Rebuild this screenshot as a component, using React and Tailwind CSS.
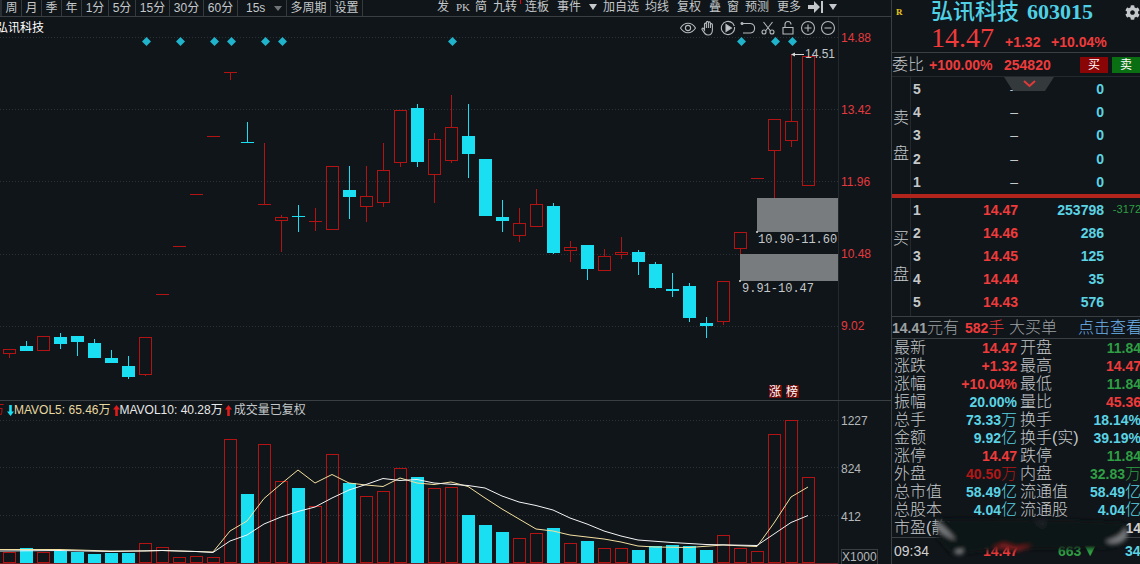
import React from "react";
import { FaCog } from "react-icons/fa";

const UP = "#b31312";
const DOWN = "#1adff2";

// [type, high, bodyTop, bodyBottom, low, volumeTop]
// r = rising (outlined), c = falling (filled)
const candles = [
  ["r", 349, 349, 353, 358, 552],
  ["c", 341, 346, 351, 351, 548],
  ["r", 336, 336, 350, 350, 552],
  ["c", 333, 337, 344, 349, 551],
  ["c", 336, 336, 342, 356, 552],
  ["c", 339, 343, 358, 358, 554],
  ["c", 350, 358, 363, 363, 553],
  ["c", 356, 366, 377, 379, 553],
  ["r", 337, 337, 374, 376, 543],
  ["r", 294, 294, 294, 294, 547],
  ["r", 246, 246, 246, 246, 557],
  ["r", 194, 194, 194, 194, 556],
  ["r", 136, 136, 136, 136, 557],
  ["r", 72, 72, 72, 80, 439],
  ["c", 122, 142, 142, 142, 494],
  ["r", 143, 204, 204, 204, 444],
  ["r", 215, 217, 220, 252, 481],
  ["c", 205, 216, 216, 232, 488],
  ["r", 208, 221, 221, 231, 506],
  ["r", 166, 166, 229, 229, 454],
  ["c", 166, 190, 197, 219, 483],
  ["r", 166, 196, 206, 222, 496],
  ["r", 143, 170, 202, 207, 491],
  ["r", 110, 110, 162, 167, 468],
  ["c", 104, 108, 162, 167, 477],
  ["r", 133, 139, 174, 203, 488],
  ["r", 95, 127, 160, 163, 487],
  ["c", 104, 136, 154, 178, 515],
  ["c", 159, 159, 216, 216, 525],
  ["c", 200, 217, 221, 232, 532],
  ["r", 208, 223, 235, 242, 538],
  ["r", 189, 204, 226, 226, 533],
  ["c", 203, 206, 253, 254, 528],
  ["r", 241, 247, 250, 262, 543],
  ["c", 245, 245, 269, 280, 541],
  ["r", 249, 256, 270, 270, 548],
  ["r", 237, 252, 254, 259, 548],
  ["c", 250, 252, 262, 275, 550],
  ["c", 262, 264, 288, 289, 546],
  ["c", 273, 289, 291, 297, 545],
  ["c", 283, 286, 318, 322, 546],
  ["c", 317, 323, 326, 338, 550],
  ["r", 281, 281, 321, 325, 535],
  ["r", 232, 232, 248, 254, 548],
  ["r", 178, 178, 178, 178, 551],
  ["r", 119, 119, 150, 198, 434],
  ["r", 54, 121, 140, 147, 420],
  ["r", 56, 56, 185, 185, 477],
];

const ma5 =
  "0,549.5 60,549.5 111,551 145,551 162,550.5 196,551.5 213,552 230,531 247,521 264,498.5 281,484 298,470 315,483 332,474.5 349,483 366,485 383,486.5 400,478 417,483 434,484.5 451,482 468,486.5 485,498 502,509 519,519 536,529 553,531 570,535 587,537 604,539 621,542 638,546 655,547 689,547.5 723,545 757,546.5 774,523 791,497 808,487";
const ma10 =
  "0,551 60,550.5 111,551.5 162,550.5 196,551.5 213,552.5 230,541 247,535 264,524 281,517 298,511.5 315,507 332,498 349,490 366,484.5 383,478.5 400,480.5 417,479.5 434,483 468,485.5 485,488 502,496 519,502 536,505.5 553,510 570,518 587,524 604,531 621,536 638,540 672,542.5 706,544.5 757,545.5 774,534 791,522.5 808,515.5";

const diamonds = [146, 180, 214, 231, 265, 282, 452, 741, 775, 792];

const periods = [
  ["周", "w-[20px]"],
  ["月", "w-[20px]"],
  ["季", "w-[20px]"],
  ["年", "w-[20px]"],
  ["1分", "w-[27px]"],
  ["5分", "w-[27px]"],
  ["15分", "w-[34px]"],
  ["30分", "w-[34px]"],
  ["60分", "w-[34px]"],
];

const sellRows = [5, 4, 3, 2, 1];
const buyRows = [
  [1, "14.47", "253798", "-3172"],
  [2, "14.46", "286"],
  [3, "14.45", "125"],
  [4, "14.44", "35"],
  [5, "14.43", "576"],
];

const RED = "text-[#ef3b3b]";
const DARKRED = "text-[#b01818]";
const CYAN = "text-[#5bd3e4]";
const GREEN = "text-[#2f9e44]";

// label, value, unit, colour - twice per row
const stats = [
  ["最新", "14.47", "", RED, "开盘", "11.84", "", GREEN],
  ["涨跌", "+1.32", "", RED, "最高", "14.47", "", RED],
  ["涨幅", "+10.04%", "", RED, "最低", "11.84", "", GREEN],
  ["振幅", "20.00%", "", CYAN, "量比", "45.36", "", RED],
  ["总手", "73.33", "万", CYAN, "换手", "18.14%", "", CYAN],
  ["金额", "9.92", "亿", CYAN, "换手(实)", "39.19%", "", CYAN],
  ["涨停", "14.47", "", RED, "跌停", "11.84", "", GREEN],
  ["外盘", "40.50", "万", DARKRED, "内盘", "32.83", "万", GREEN],
  ["总市值", "58.49", "亿", CYAN, "流通值", "58.49", "亿", CYAN],
  ["总股本", "4.04", "亿", CYAN, "流通股", "4.04", "亿", CYAN],
  ["市盈(静)", "", "", CYAN, "", "14", "", "text-[#d0d0d0]"],
];

function Toolbar() {
  return (
    <nav className="flex h-[17px] items-start justify-between border-b border-[#3a3f43] text-xs leading-[14px] text-[#c4c8ca]">
      <div className="flex border-l-2 border-[#2a2f33]">
        {periods.map(([label, width]) => (
          <button
            key={label}
            className={`${width} h-4 shrink-0 border-r border-[#353a3e] text-center`}
          >
            {label}
          </button>
        ))}
        <button className="flex h-4 w-[49px] items-center justify-between border-r border-[#353a3e] pr-1 pl-2">
          15s
          <svg width="8" height="5" viewBox="0 0 8 5">
            <path d="M0 0h8L4 5z" fill="#6f7478" />
          </svg>
        </button>
        <button className="h-4 w-11 border-r border-[#353a3e] whitespace-nowrap">
          多周期
        </button>
        <button className="h-4 w-8 border-r border-[#353a3e]">设置</button>
      </div>
      <div className="mr-[50px] flex shrink-0 items-start whitespace-nowrap">
        <button className="w-5">发</button>
        <button className="w-5 font-['Liberation_Serif'] text-[11px]">PK</button>
        <button className="w-4">简</button>
        <button className="relative w-8">
          九转
          <span className="absolute top-0 right-0 h-1 w-px bg-red-600" />
        </button>
        <button className="w-8">连板</button>
        <button className="w-8">事件</button>
        <button className="flex h-[14px] w-4 items-center justify-center" aria-label="事件菜单">
          <svg width="8" height="6" viewBox="0 0 8 6">
            <path d="M0 0h8L4 6z" fill="#c4c8ca" />
          </svg>
        </button>
        <button className="w-10">加自选</button>
        <button className="w-8">均线</button>
        <button className="w-8">复权</button>
        <button className="w-5">叠</button>
        <button className="w-4">窗</button>
        <button className="w-8">预测</button>
        <button className="w-8">更多</button>
        <button className="flex h-[14px] w-5 items-center justify-center" aria-label="跳到最新">
          <svg width="15" height="12" viewBox="0 0 15 12">
            <path d="M0 4h6V0l6 6-6 6V8H0zM13 0h2v12h-2z" fill="#c4c8ca" />
          </svg>
        </button>
        <button className="flex h-[14px] w-4 items-center justify-center" aria-label="展开">
          <svg width="8" height="6" viewBox="0 0 8 6">
            <path d="M0 0h8L4 6z" fill="#c4c8ca" />
          </svg>
        </button>
      </div>
    </nav>
  );
}

function ToolIcons() {
  const common = {
    width: 16,
    height: 16,
    viewBox: "0 0 16 16",
    fill: "none",
    stroke: "#b4b9bc",
    strokeWidth: 1.1,
  };
  return (
    <div className="flex gap-1">
      <button aria-label="显示">
        <svg {...common}>
          <path d="M.5 8C2.5 4.800 5 3.300 8 3.300S13.500 4.800 15.500 8C13.500 11.200 11 12.700 8 12.700S2.500 11.200.5 8z" />
          <circle cx="8" cy="8" r="2.600" />
        </svg>
      </button>
      <button aria-label="拖动">
        <svg {...common}>
          <path d="M4.500 10V4.200c0-1.500 1.900-1.500 1.900 0V8V2.500c0-1.500 2-1.500 2 0V8V3c0-1.500 2-1.500 2 0v5V4.700c0-1.400 2-1.400 2 0V10c0 3-1.400 5-4.200 5C5.500 15 4.500 13.500 2.200 9.800c-.9-1.500.8-2.200 1.500-1.100z" />
        </svg>
      </button>
      <button aria-label="播放">
        <svg {...common}>
          <path d="M12.500 3.200A6.600 6.600 0 1 0 14.500 7M10.500 1.800A6.600 6.600 0 0 1 14.300 6" />
          <path d="M6 4.500v7L11.500 8z" fill="#c4c8ca" />
        </svg>
      </button>
      <button aria-label="撤销">
        <svg {...common}>
          <path d="M2 3.500h8.500a4.800 4.800 0 0 1 0 9.500H3" />
          <circle cx="2" cy="3.500" r="1" fill="#b4b9bc" />
        </svg>
      </button>
      <button aria-label="剪切">
        <svg {...common}>
          <path d="M3.500 2l7 9M12.500 2l-7 9" />
          <circle cx="4" cy="12" r="2" />
          <circle cx="12" cy="12" r="2" />
        </svg>
      </button>
      <button aria-label="锁定">
        <svg {...common}>
          <path d="M3 7.500h10v6.500H3zM5 7.500V4.500a3 3 0 0 1 6 0" />
        </svg>
      </button>
      <button aria-label="放大">
        <svg {...common}>
          <circle cx="8" cy="8" r="6.500" />
          <path d="M8 4.500v7M4.500 8h7" />
        </svg>
      </button>
      <button aria-label="缩小">
        <svg {...common}>
          <circle cx="8" cy="8" r="6.500" />
          <path d="M4.500 8h7" />
        </svg>
      </button>
    </div>
  );
}

function Candle({ index, data }) {
  const [type, high, top, bottom, low] = data;
  const x = 9 + index * 17;
  const color = type === "r" ? UP : DOWN;
  return (
    <g shapeRendering="crispEdges">
      {high < top && <rect x={x} y={high} width="1" height={top - high} fill={color} />}
      {low > bottom && <rect x={x} y={bottom} width="1" height={low - bottom} fill={color} />}
      {top === bottom ? (
        <rect x={x - 6} y={top} width="13" height="1" fill={color} />
      ) : type === "r" ? (
        <rect x={x - 5.5} y={top + 0.5} width="12" height={bottom - top} fill="none" stroke={color} />
      ) : (
        <rect x={x - 6} y={top} width="13" height={bottom - top} fill={color} />
      )}
    </g>
  );
}

function GridLines({ lines }) {
  return lines.map((y) => (
    <line
      key={y}
      x1="0"
      x2="838"
      y1={y + 0.5}
      y2={y + 0.5}
      stroke="#2c3135"
      strokeDasharray="1 2"
    />
  ));
}

function PriceChart() {
  return (
    <svg className="block w-full" viewBox="0 17 838 383" preserveAspectRatio="none">
      <GridLines lines={[37, 109, 181, 254, 326]} />
      {diamonds.map((x) => (
        <path key={x} d={`M${x + 0.5} 37l4.500 4.500-4.500 4.500-4.500-4.500z`} fill="#1fb4cb" />
      ))}
      {candles.map((c, i) => (
        <Candle key={i} index={i} data={c} />
      ))}
      <rect x="757" y="198" width="81" height="34" fill="#797c7f" />
      <rect x="740" y="254" width="98" height="27" fill="#797c7f" />
      <circle cx="757" cy="232" r="1" fill="#ddd" />
      <circle cx="740" cy="281" r="1" fill="#ddd" />
      <g fill="#c4c8ca" fontSize="12">
        <text x="758" y="243" fontFamily="Liberation Mono, monospace">10.90-11.60</text>
        <text x="742" y="292" fontFamily="Liberation Mono, monospace">9.91-10.47</text>
        <text x="805" y="58" fontFamily="Liberation Sans, sans-serif">14.51</text>
      </g>
      <path d="M791 54.500l4-2v1.500h9v1h-9v1.500z" fill="#d8d8d8" />
      <rect x="769" y="385" width="13" height="13" fill="#6d0b0b" />
      <rect x="786" y="385" width="13" height="13" fill="#6d0b0b" />
      <g fill="#fff" fontSize="12" fontFamily="Noto Sans CJK SC, sans-serif">
        <text x="769" y="396">涨</text>
        <text x="786" y="396">榜</text>
      </g>
    </svg>
  );
}

function VolumeChart() {
  return (
    <svg className="block w-full" viewBox="0 419 838 145" preserveAspectRatio="none">
      <GridLines lines={[420, 467, 515]} />
      <g shapeRendering="crispEdges">
        {candles.map(([type, , , , , top], i) =>
          type === "r" ? (
            <rect key={i} x={3.5 + i * 17} y={top + 0.5} width="12" height={562 - top} fill="none" stroke={UP} />
          ) : (
            <rect key={i} x={3 + i * 17} y={top} width="13" height={563 - top} fill={DOWN} />
          )
        )}
        <rect x="0" y="563" width="838" height="1" fill="#7a2228" />
      </g>
      <polyline points={ma5} fill="none" stroke="#f3e0a0" />
      <polyline points={ma10} fill="none" stroke="#f4f4f4" />
    </svg>
  );
}

function Arrow({ up }) {
  return (
    <svg width="7" height="11" viewBox="0 0 7 11" className={up ? "text-[#e01b1b]" : "rotate-180 text-[#1adff2]"}>
      <path d="M3.500 0L7 4.500H4.800V11H2.200V4.500H0z" fill="currentColor" />
    </svg>
  );
}

function ChartPanel() {
  return (
    <main className="min-w-0 flex-1">
      <Toolbar />
      <section className="flex border-b border-[#3a3f43]">
        <div className="relative min-w-0 flex-1">
          <PriceChart />
          <div className="absolute inset-x-0 top-0 flex justify-between pt-[3px] pr-[2px]">
            <h1 className="-ml-1 text-xs leading-4 text-white">弘讯科技</h1>
            <ToolIcons />
          </div>
        </div>
        <div className="flex w-[53px] flex-col gap-14 border-l border-[#24292d] pt-[13px] pl-[2px] text-xs leading-4 text-[#e23a3f]">
          <span>14.88</span>
          <span>13.42</span>
          <span>11.96</span>
          <span>10.48</span>
          <span>9.02</span>
        </div>
      </section>
      <section className="flex">
        <div className="min-w-0 flex-1">
          <div className="flex h-[18px] items-center text-xs whitespace-nowrap">
            <span className="-ml-2 w-[15px] text-[#b31312]">万</span>
            <Arrow />
            <span className="text-[#e8d9a0]">MAVOL5: 65.46万</span>
            <span className="w-[2px]" />
            <Arrow up />
            <span className="text-[#e8e8e8]">MAVOL10: 40.28万</span>
            <span className="w-[2px]" />
            <Arrow up />
            <span className="ml-[2px] text-[#c4c8ca]">成交量已复权</span>
          </div>
          <VolumeChart />
        </div>
        <div className="flex w-[53px] flex-col gap-8 border-l border-[#24292d] pt-3 pl-[2px] text-xs leading-4 text-[#b4b8ba]">
          <span>1227</span>
          <span>824</span>
          <span>412</span>
          <span className="-mt-2 w-fit border border-[#3a3f43] leading-[14px]">X1000</span>
        </div>
      </section>
    </main>
  );
}

function SideLabel({ chars }) {
  return (
    <div className="flex w-[19px] shrink-0 flex-col items-center justify-center gap-3 border-r border-[#24292d] text-base leading-6 font-light text-[#c4c8ca]">
      {chars.map((c) => (
        <span key={c}>{c}</span>
      ))}
    </div>
  );
}

function StatValue({ value, unit, color }) {
  return (
    <td className={`text-right ${color}`}>
      {value}
      {unit && <span className="text-base leading-[18px] font-light">{unit}</span>}
    </td>
  );
}

function QuotePanel() {
  return (
    <aside className="relative w-[249px] shrink-0 overflow-hidden border-l border-[#3a3f43] text-sm font-bold whitespace-nowrap">
      <header className="h-[53px] border-b border-[#3a3f43]">
        <div className="flex h-6 items-center">
          <span className="w-[39px] shrink-0 pl-1 font-['Liberation_Serif'] text-[9px] text-[#e8c31c]">R</span>
          <h2 className="flex gap-2 font-['Liberation_Serif','Noto_Sans_CJK_SC',serif] text-[22px] leading-6 text-[#4fd0e4]">
            <span className="font-medium">弘讯科技</span>
            <span>603015</span>
          </h2>
          <button className="ml-8 text-[#c4c8ca]" aria-label="设置">
            <FaCog size={15} />
          </button>
        </div>
        <div className={`flex items-baseline pl-[39px] leading-7 ${RED}`}>
          <span className="w-[74px] font-['Liberation_Serif'] text-[28px] font-normal">14.47</span>
          <span className="w-[46px]">+1.32</span>
          <span>+10.04%</span>
        </div>
      </header>

      <div className="flex h-6 items-center border-b border-[#24292d]">
        <span className="w-[37px] text-base font-light text-[#c4c8ca]">委比</span>
        <span className={`w-[75px] ${RED}`}>+100.00%</span>
        <span className={`w-[76px] ${RED}`}>254820</span>
        <button className="mr-1 h-4 w-7 shrink-0 bg-[#8a0606] text-xs font-normal text-white">买</button>
        <button className="h-4 w-7 shrink-0 bg-[#0a6e12] text-xs font-normal text-white">卖</button>
      </div>

      <section className="relative flex h-[117px]">
        <SideLabel chars={["卖", "盘"]} />
        <table className="w-[193px] table-fixed">
          <tbody>
            {sellRows.map((n) => (
              <tr key={n} className="h-[23px]">
                <td className="w-6 pl-[2px] text-[#c4c8ca]">{n}</td>
                <td className="w-[83px] text-right font-normal text-[#c4c8ca]">–</td>
                <td className={`text-right ${CYAN}`}>0</td>
              </tr>
            ))}
          </tbody>
        </table>
        <button className="absolute top-0 left-28" aria-label="收起">
          <svg width="50" height="14" viewBox="0 0 50 14">
            <path d="M0 0h50l-9 14H9z" fill="#34393c" />
            <path d="M20 4l5.500 5L31 4" fill="none" stroke="#e03a3a" strokeWidth="2" />
          </svg>
        </button>
      </section>

      <section className="flex h-[123px] border-t-4 border-b border-t-[#b3241d] border-b-[#3a3f43]">
        <SideLabel chars={["买", "盘"]} />
        <table className="mb-[2px] w-[230px] shrink-0 table-fixed">
          <tbody>
            {buyRows.map(([n, price, qty, diff]) => (
              <tr key={n} className="h-[23px]">
                <td className="w-6 pl-[2px] text-[#c4c8ca]">{n}</td>
                <td className={`w-[83px] text-right ${RED}`}>{price}</td>
                <td className={`w-[86px] text-right ${CYAN}`}>{qty}</td>
                <td className="text-right text-[11px] font-normal text-[#2f9e44]">{diff}</td>
              </tr>
            ))}
          </tbody>
        </table>
      </section>

      <div className="flex h-[22px] items-center border-b border-[#3a3f43] text-base leading-5 font-light text-[#9da1a4]">
        <span className="w-[73px] shrink-0">
          <span className="text-sm font-bold">14.41</span>元有
        </span>
        <span className={`w-11 shrink-0 ${RED}`}>
          <span className="text-sm font-bold">582</span>手
        </span>
        <span className="w-[69px] shrink-0">大买单</span>
        <a href="#detail" className="text-[#6fb4ee]">点击查看</a>
      </div>

      <table className="w-[249px] table-fixed">
        <colgroup>
          <col className="w-[60px]" />
          <col className="w-[65px]" />
          <col className="w-[60px]" />
          <col />
        </colgroup>
        <tbody>
          {stats.map(([l, lv, lu, lc, r, rv, ru, rc]) => (
            <tr key={l} className="h-[18px] leading-[18px]">
              <th className="pl-[2px] text-left text-base leading-[18px] font-light text-[#c4c8ca]">{l}</th>
              <StatValue value={lv} unit={lu} color={lc} />
              <th className="pl-[3px] text-left text-base leading-[18px] font-light text-[#c4c8ca]">{r}</th>
              <StatValue value={rv} unit={ru} color={rc} />
            </tr>
          ))}
        </tbody>
      </table>

      <footer className="flex h-[26px] items-center border-t border-[#3a3f43]">
        <span className="w-[91px] shrink-0 pl-[2px] font-normal text-[#d0d0d0]">09:34</span>
        <span className={`w-[75px] shrink-0 ${RED}`}>14.47</span>
        <span className={`w-[67px] shrink-0 ${GREEN}`}>
          663<span className="text-lg leading-4">▼</span>
        </span>
        <span className={CYAN}>34</span>
      </footer>

      {/* smudge over the lower rows */}
      <svg className="pointer-events-none absolute bottom-0 left-0" width="249" height="60" viewBox="0 0 249 60">
        <defs>
          <filter id="soft" x="-20%" y="-50%" width="140%" height="200%">
            <feGaussianBlur stdDeviation="2" />
          </filter>
        </defs>
        <g filter="url(#soft)">
          <path d="M46 14C90 13 150 15 200 16L234 18V36C226 44 210 44 200 43L160 44 110 44 60 50 46 34z" fill="#101418" />
          <path d="M44 16C52 20 58 28 64 35C56 33 48 28 44 22z" fill="#77797b" />
          <path d="M234 22C230 30 222 34 213 36C220 41 232 38 236 30z" fill="#77797b" />
          <path d="M140 16L156 15 152 24z" fill="#1e2326" />
          <path d="M62 46L72 44 68 50z" fill="#8a8d8f" />
          <path d="M100 43L112 38 124 42 140 40 128 46z" fill="#7a1c1e" />
        </g>
      </svg>
    </aside>
  );
}

export default function App() {
  return (
    <div className="flex min-h-screen overflow-hidden bg-[#101519] font-['Liberation_Sans','Noto_Sans_CJK_SC',sans-serif]">
      <ChartPanel />
      <QuotePanel />
    </div>
  );
}
